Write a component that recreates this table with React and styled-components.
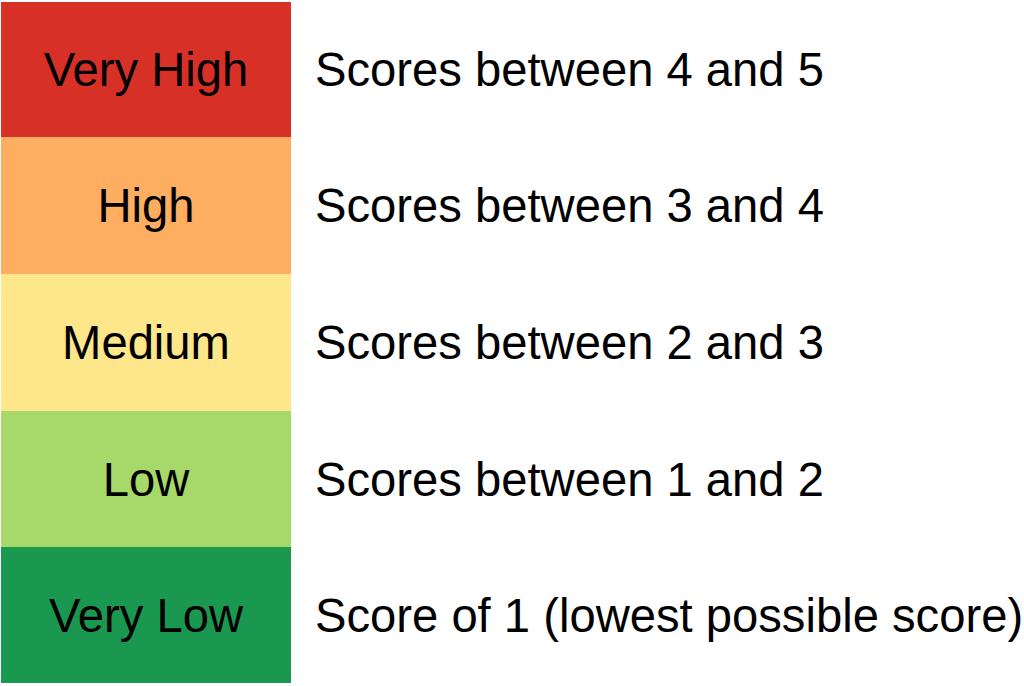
import React from "react";
import styled, { createGlobalStyle } from "styled-components";

const Global = createGlobalStyle`
  html, body {
    margin: 0;
    padding: 0;
    background: #ffffff;
  }
  body {
    font-family: "Liberation Sans", Arial, sans-serif;
    color: #000;
  }
`;

const Legend = styled.div`
  display: flex;
  flex-direction: column;
  padding: 2px 0 0 1px;
  width: 1024px;
  box-sizing: border-box;
`;

const Row = styled.div`
  display: grid;
  grid-template-columns: 290px 1fr;
  column-gap: 24px;
  height: ${(p) => p.$h}px;
`;

const Swatch = styled.div`
  display: flex;
  align-items: center;
  justify-content: center;
  background: ${(p) => p.$color};
  font-size: 47.2px;
  white-space: nowrap;
`;

const Description = styled.div`
  display: flex;
  align-items: center;
  font-size: 47.2px;
  white-space: nowrap;
`;

const levels = [
  { label: "Very High", color: "#d73027", text: "Scores between 4 and 5", h: 135 },
  { label: "High", color: "#fdae61", text: "Scores between 3 and 4", h: 137 },
  { label: "Medium", color: "#fee68b", text: "Scores between 2 and 3", h: 137 },
  { label: "Low", color: "#a6d96a", text: "Scores between 1 and 2", h: 136 },
  { label: "Very Low", color: "#1a9850", text: "Score of 1 (lowest possible score)", h: 136 },
];

export default function App() {
  return (
    <>
      <Global />
      <Legend>
        {levels.map((l) => (
          <Row key={l.label} $h={l.h}>
            <Swatch $color={l.color}>{l.label}</Swatch>
            <Description>{l.text}</Description>
          </Row>
        ))}
      </Legend>
    </>
  );
}
